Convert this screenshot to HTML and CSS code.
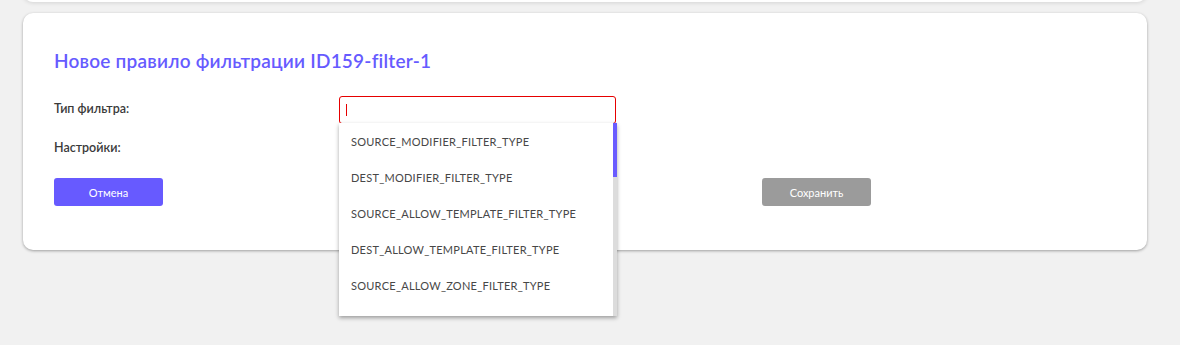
FILE: index.html
```html
<!DOCTYPE html>
<html lang="ru">
<head>
<meta charset="utf-8">
<title>Новое правило фильтрации</title>
<link rel="stylesheet" href="styles.css">
</head>
<body>
<div class="page">
  <div class="card card-top"></div>
  <div class="card card-main">
    <h2 class="title">Новое правило фильтрации ID159-filter-1</h2>
    <div class="form">
      <div class="row">
        <div class="label">Тип фильтра:</div>
        <div class="field">
          <div class="input"><span class="caret"></span></div>
          <div class="dropdown">
            <ul class="list">
              <li>SOURCE_MODIFIER_FILTER_TYPE</li>
              <li>DEST_MODIFIER_FILTER_TYPE</li>
              <li>SOURCE_ALLOW_TEMPLATE_FILTER_TYPE</li>
              <li>DEST_ALLOW_TEMPLATE_FILTER_TYPE</li>
              <li>SOURCE_ALLOW_ZONE_FILTER_TYPE</li>
            </ul>
            <div class="scrollbar"><div class="thumb"></div></div>
          </div>
        </div>
      </div>
      <div class="row row-settings">
        <div class="label">Настройки:</div>
      </div>
      <div class="buttons">
        <button class="btn btn-cancel">Отмена</button>
        <button class="btn btn-save">Сохранить</button>
      </div>
    </div>
  </div>
</div>
</body>
</html>
```

FILE: styles.css
```css
* { box-sizing: border-box; }
html, body { margin: 0; padding: 0; }
body {
  background: #f1f1f1;
  font-family: "Lato", "Noto Sans", sans-serif;
  color: #333;
  width: 1180px;
  height: 345px;
  overflow: hidden;
}
.page {
  padding: 0 33px 0 23px;
}
.card {
  background: #fff;
  border-radius: 10px;
  box-shadow: 0 1px 3px rgba(0,0,0,0.35);
}
.card-top {
  height: 20px;
  margin-top: -18px;
  box-shadow: 0 1px 4px rgba(0,0,0,0.12);
}
.card-main {
  margin-top: 11px;
  padding: 36px 31px 44px;
  height: 237px;
}
.title {
  margin: 0;
  font-size: 19px;
  line-height: 24px;
  font-weight: 600;
  letter-spacing: 0.22px;
  color: #665bff;
}
.form {
  margin-top: 23px;
  width: 817px;
}
.row {
  display: flex;
  align-items: center;
  height: 28px;
}
.label {
  width: 285px;
  font-size: 12.5px;
  font-weight: 600;
  color: #3a3a3a;
}
.row .label { margin-top: -3px; }
.row-settings { margin-top: 11px; }
.field {
  position: relative;
  width: 277px;
}
.input {
  height: 28px;
  border: 1px solid #e60000;
  border-radius: 3px;
  display: flex;
  align-items: center;
  padding-left: 6px;
}
.caret {
  width: 1px;
  height: 12px;
  background: #e60000;
}
.dropdown {
  position: absolute;
  top: 27px;
  left: 0;
  width: 278px;
  height: 193px;
  background: #fff;
  display: flex;
  box-shadow: 0 2px 4px rgba(0,0,0,0.35);
  z-index: 5;
}
.list {
  list-style: none;
  margin: 0;
  padding: 0;
  flex: 1;
  overflow: hidden;
}
.list li {
  height: 36px;
  line-height: 38px;
  padding-left: 12px;
  font-size: 11px;
  letter-spacing: 0.25px;
  color: #474747;
  white-space: nowrap;
}
.scrollbar {
  width: 4px;
  background: #dcdcdc;
}
.thumb {
  height: 54px;
  background: #6a5cff;
}
.buttons {
  display: flex;
  justify-content: space-between;
  margin-top: 15px;
}
.btn {
  width: 109px;
  height: 28px;
  border: none;
  border-radius: 3px;
  color: #fff;
  font-family: inherit;
  font-size: 11px;
  padding: 0;
}
.btn-cancel { background: #675aff; }
.btn-save { background: #9b9b9b; }
```
